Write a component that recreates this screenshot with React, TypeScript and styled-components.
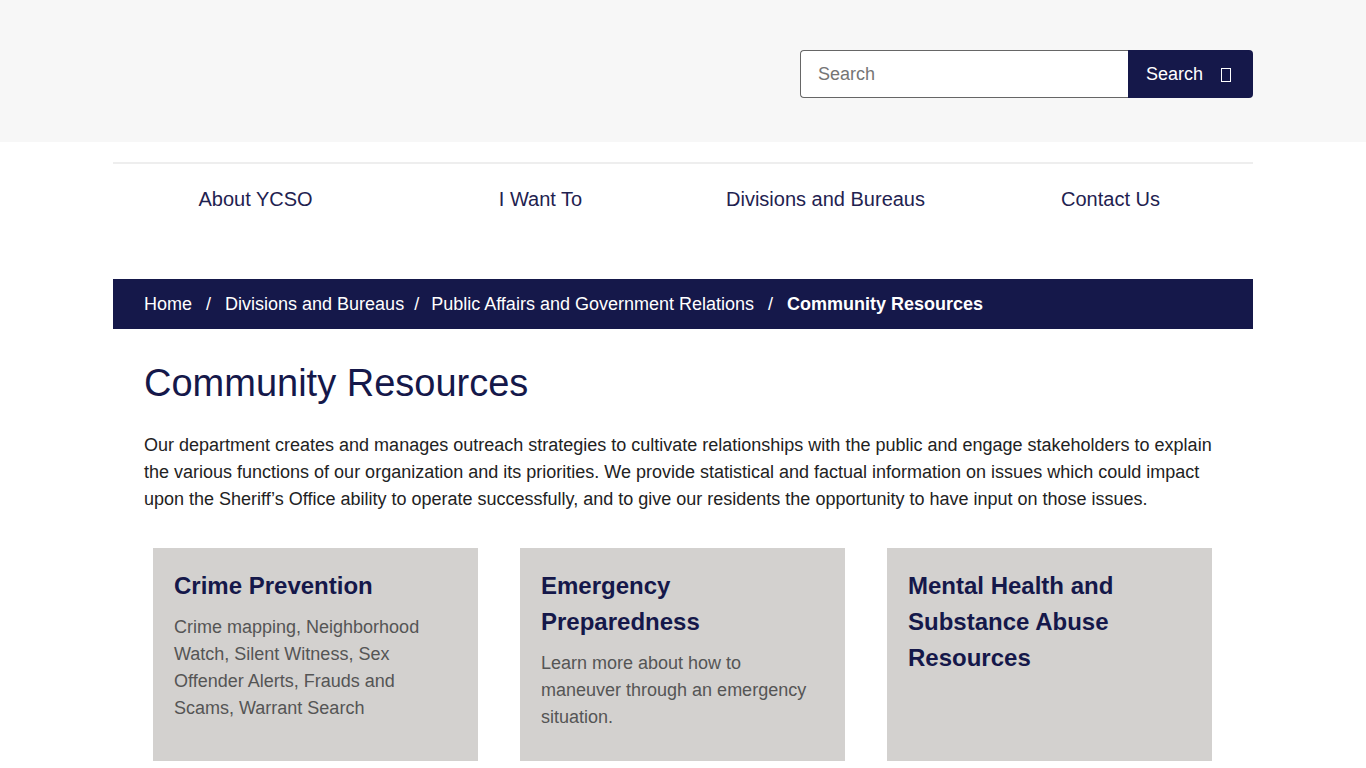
import React from "react";
import styled, { createGlobalStyle } from "styled-components";

const Global = createGlobalStyle`
  html, body { margin: 0; padding: 0; background: #fff; }
  body { font-family: "Liberation Sans", Arial, sans-serif; }
  * { box-sizing: border-box; }
`;

const NAVY = "#15184a";

const TopBar = styled.header`
  background: #f7f7f7;
  height: 142px;
`;

const TopInner = styled.div`
  width: 1140px;
  margin: 0 auto;
  display: flex;
  justify-content: flex-end;
  padding-top: 50px;
`;

const SearchForm = styled.form`
  display: flex;
  height: 48px;
`;

const SearchInput = styled.input`
  width: 328px;
  height: 48px;
  border: 1px solid #666;
  border-right: none;
  border-radius: 4px 0 0 4px;
  padding: 0 17px;
  font-family: "Liberation Sans", Arial, sans-serif;
  font-size: 18px;
  color: #333;
  background: #fff;
  outline: none;
  &::placeholder { color: #757575; }
`;

const SearchButton = styled.button`
  width: 125px;
  height: 48px;
  background: ${NAVY};
  color: #fff;
  border: none;
  border-radius: 0 4px 4px 0;
  font-family: "Liberation Sans", Arial, sans-serif;
  font-size: 18px;
  display: flex;
  align-items: center;
  padding: 0 0 0 18px;
  gap: 18px;
`;

const BoxGlyph = styled.span`
  display: inline-block;
  width: 10px;
  height: 14px;
  border: 1px solid #fff;
  margin-top: 1px;
`;

const Container = styled.div`
  width: 1140px;
  margin: 0 auto;
`;

const Nav = styled.nav`
  margin-top: 20px;
  border-top: 2px solid #eeeeee;
  display: grid;
  grid-template-columns: repeat(4, 1fr);
  height: 72px;
  align-items: center;
`;

const NavItem = styled.a`
  text-align: center;
  font-size: 20px;
  color: #1f2250;
  text-decoration: none;
`;

const Breadcrumb = styled.div`
  margin-top: 45px;
  background: ${NAVY};
  height: 50px;
  display: flex;
  align-items: center;
  padding-left: 31px;
  color: #fff;
  font-size: 18px;
`;

const Crumb = styled.span<{ $current?: boolean }>`
  font-weight: ${(p) => (p.$current ? 700 : 400)};
`;

const Sep = styled.span<{ $tight?: boolean }>`
  padding: ${(p) => (p.$tight ? "0 12px 0 10px" : "0 14px")};
`;

const Main = styled.main`
  padding: 0 31px;
`;

const Title = styled.h1`
  margin: 31px 0 0;
  font-size: 38px;
  font-weight: 400;
  color: ${NAVY};
  line-height: 46px;
`;

const Intro = styled.p`
  margin: 26px 0 0;
  font-size: 18px;
  line-height: 27px;
  color: #222;
`;

const Cards = styled.div`
  margin: 35px 0 0;
  padding: 0 40px;
  display: grid;
  grid-template-columns: repeat(3, 325px);
  gap: 42px;
`;

const Card = styled.a`
  background: #d3d1cf;
  height: 213px;
  padding: 20px 21px;
  text-decoration: none;
  display: block;
`;

const CardTitle = styled.h2`
  margin: 0;
  font-size: 24px;
  line-height: 36px;
  font-weight: 700;
  color: ${NAVY};
`;

const CardText = styled.p`
  margin: 10px 0 0;
  font-size: 18px;
  line-height: 27px;
  color: #555;
`;

const cards = [
  {
    title: "Crime Prevention",
    text: "Crime mapping, Neighborhood Watch, Silent Witness, Sex Offender Alerts, Frauds and Scams, Warrant Search",
  },
  {
    title: "Emergency Preparedness",
    text: "Learn more about how to maneuver through an emergency situation.",
  },
  { title: "Mental Health and Substance Abuse Resources", text: "" },
];

export default function App() {
  return (
    <>
      <Global />
      <TopBar>
        <TopInner>
          <SearchForm onSubmit={(e) => e.preventDefault()}>
            <SearchInput placeholder="Search" />
            <SearchButton type="submit">
              Search <BoxGlyph />
            </SearchButton>
          </SearchForm>
        </TopInner>
      </TopBar>
      <Container>
        <Nav>
          <NavItem href="#">About YCSO</NavItem>
          <NavItem href="#">I Want To</NavItem>
          <NavItem href="#">Divisions and Bureaus</NavItem>
          <NavItem href="#">Contact Us</NavItem>
        </Nav>
        <Breadcrumb>
          <Crumb>Home</Crumb>
          <Sep>/</Sep>
          <Crumb>Divisions and Bureaus</Crumb>
          <Sep $tight>/</Sep>
          <Crumb>Public Affairs and Government Relations</Crumb>
          <Sep>/</Sep>
          <Crumb $current>Community Resources</Crumb>
        </Breadcrumb>
        <Main>
          <Title>Community Resources</Title>
          <Intro>
            Our department creates and manages outreach strategies to cultivate relationships with the public and
            engage stakeholders to explain the various functions of our organization and its priorities. We provide
            statistical and factual information on issues which could impact upon the Sheriff’s Office ability to
            operate successfully, and to give our residents the opportunity to have input on those issues.
          </Intro>
        </Main>
        <Cards>
          {cards.map((c) => (
            <Card href="#" key={c.title}>
              <CardTitle>{c.title}</CardTitle>
              {c.text && <CardText>{c.text}</CardText>}
            </Card>
          ))}
        </Cards>
      </Container>
    </>
  );
}
